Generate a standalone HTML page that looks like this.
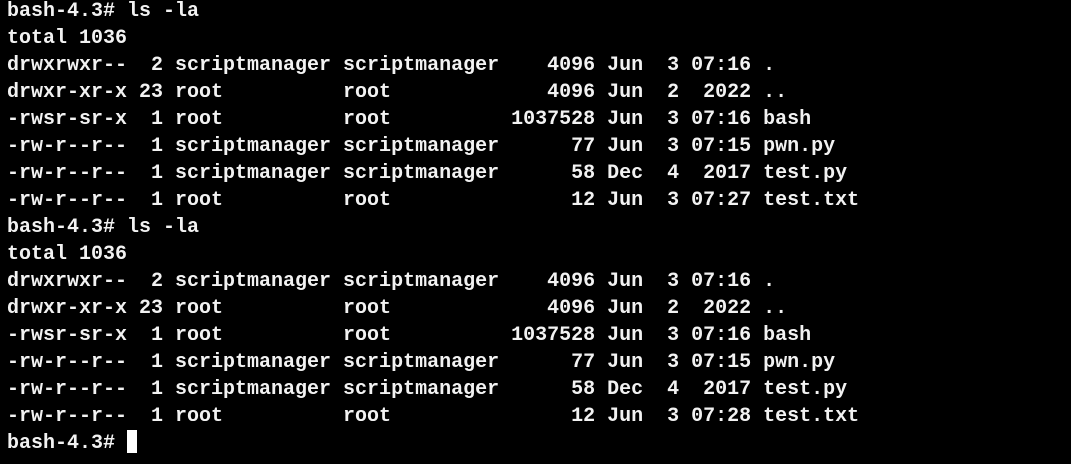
<!DOCTYPE html>
<html><head><style>
html,body{margin:0;padding:0;background:#000;width:1071px;height:464px;overflow:hidden}
pre{margin:0;position:absolute;left:7px;top:-2px;font-family:"Liberation Mono",monospace;font-size:20px;line-height:27px;font-weight:bold;color:#f2f2f2}
.c{display:inline-block;width:10px;height:23px;background:#fff;vertical-align:-5px}
</style></head><body><pre>bash-4.3# ls -la
total 1036
drwxrwxr--  2 scriptmanager scriptmanager    4096 Jun  3 07:16 .
drwxr-xr-x 23 root          root             4096 Jun  2  2022 ..
-rwsr-sr-x  1 root          root          1037528 Jun  3 07:16 bash
-rw-r--r--  1 scriptmanager scriptmanager      77 Jun  3 07:15 pwn.py
-rw-r--r--  1 scriptmanager scriptmanager      58 Dec  4  2017 test.py
-rw-r--r--  1 root          root               12 Jun  3 07:27 test.txt
bash-4.3# ls -la
total 1036
drwxrwxr--  2 scriptmanager scriptmanager    4096 Jun  3 07:16 .
drwxr-xr-x 23 root          root             4096 Jun  2  2022 ..
-rwsr-sr-x  1 root          root          1037528 Jun  3 07:16 bash
-rw-r--r--  1 scriptmanager scriptmanager      77 Jun  3 07:15 pwn.py
-rw-r--r--  1 scriptmanager scriptmanager      58 Dec  4  2017 test.py
-rw-r--r--  1 root          root               12 Jun  3 07:28 test.txt
bash-4.3# <span class="c"></span></pre></body></html>
